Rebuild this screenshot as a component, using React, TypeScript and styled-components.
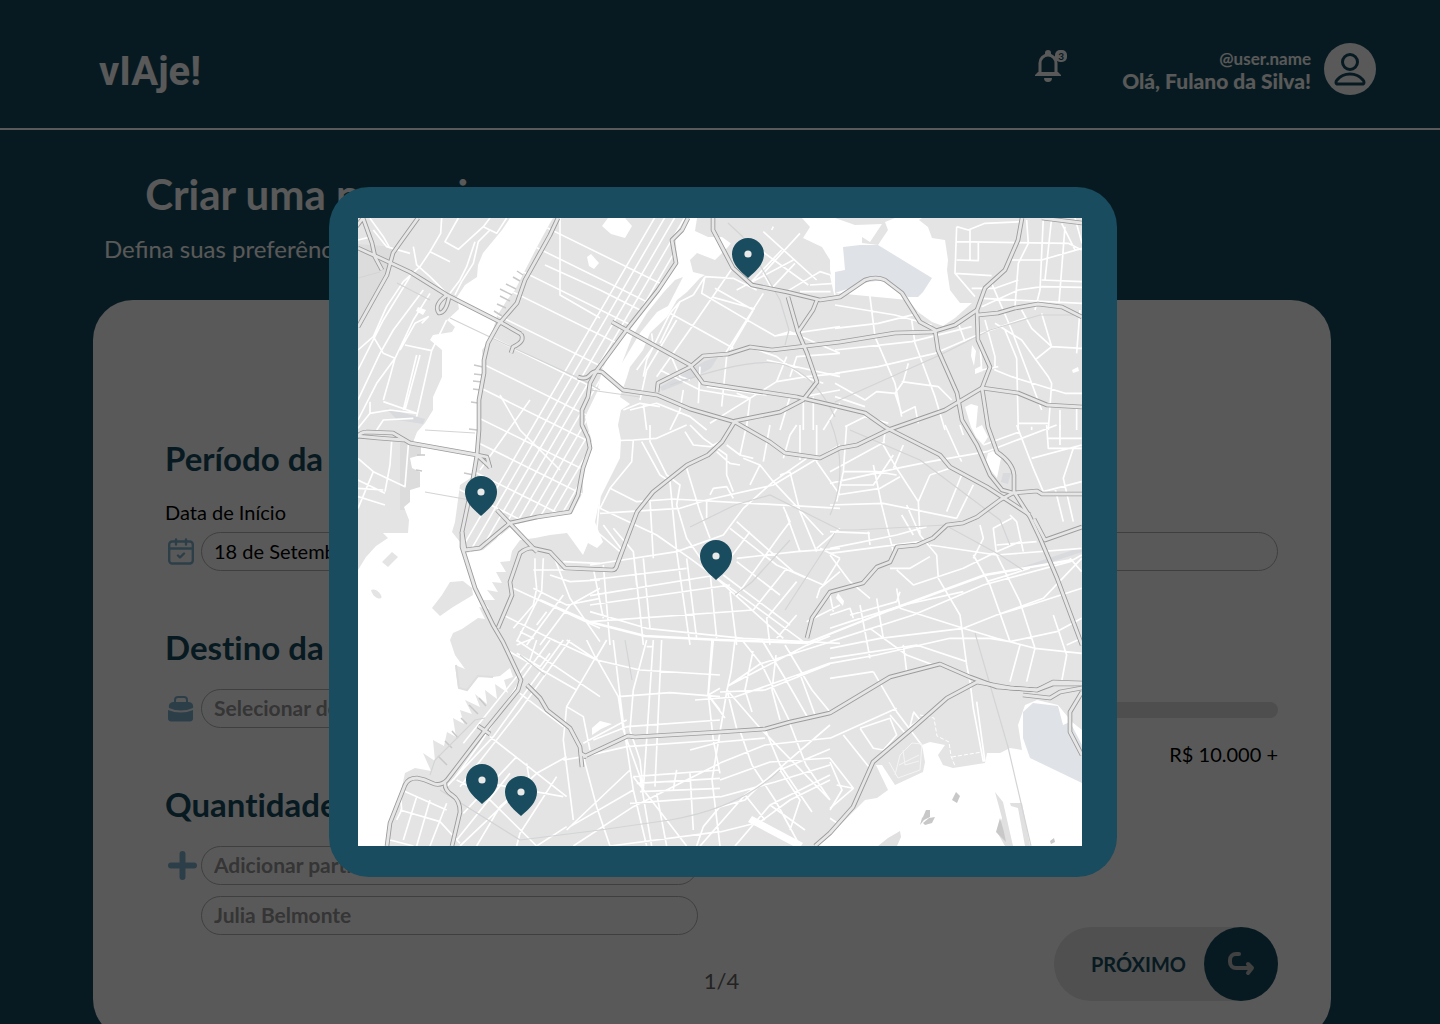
import React from "react";
import styled, { createGlobalStyle } from "styled-components";

const teal = "#184c5e";
const sky = "#7fb4d0";
const grey = "#999999";
const font = `"Lato", "Open Sans", sans-serif`;

const GlobalStyle = createGlobalStyle`
  *, *::before, *::after { box-sizing: border-box; }
  body { margin: 0; overflow: hidden; background: ${teal}; font-family: ${font}; }
  h1, h2, p { margin: 0; }
  h2, input, button { font-variant-ligatures: none; }
  input, button { font-family: inherit; }
`;

const Page = styled.div`
  height: 100vh;
  overflow: hidden;
  background: ${teal};
`;

const Header = styled.header`
  display: flex;
  align-items: center;
  height: 130px;
  padding: 10px 64px 0 99px;
  border-bottom: 2px solid #ffffff;
  color: #ffffff;
`;

const Logo = styled.a`
  margin-right: auto;
  padding-top: 6px;
  color: inherit;
  font-family: Roboto, sans-serif;
  font-size: 40px;
  font-weight: 700;
  line-height: 48px;
  text-decoration: none;
`;

const BellButton = styled.button`
  position: relative;
  width: 32px;
  height: 32px;
  margin: 0 55px 6px 0;
  padding: 0;
  border: 0;
  background: none;
  color: inherit;
`;

const Badge = styled.span`
  position: absolute;
  top: 0;
  right: 0;
  width: 12px;
  height: 12px;
  border-radius: 5px;
  background: #ffffff;
  color: ${teal};
  font-size: 10px;
  font-weight: 700;
  line-height: 12px;
  text-align: center;
`;

const User = styled.div`
  display: flex;
  align-items: center;
  gap: 13px;
  text-align: right;
`;

const UserText = styled.div`
  padding-top: 4px;
`;

const Handle = styled.p`
  font-size: 17px;
  font-weight: 700;
  line-height: 20px;
`;

const Greeting = styled.p`
  font-size: 21px;
  font-weight: 900;
  line-height: 24px;
`;

const Avatar = styled.span`
  display: grid;
  place-items: center;
  width: 52px;
  height: 52px;
  border-radius: 50%;
  background: #ffffff;
  color: ${teal};
`;

const Intro = styled.section`
  width: fit-content;
  padding: 39px 0 35px 104px;
  color: #ffffff;
  text-align: center;
`;

const Title = styled.h1`
  font-size: 42px;
  font-weight: 700;
  line-height: 50px;
`;

const Subtitle = styled.p`
  padding-top: 14px;
  font-size: 24px;
  line-height: 32px;
`;

const Card = styled.form`
  margin: 0 109px 0 93px;
  padding: 138px 53px 38px 72px;
  border-radius: 40px;
  background: #ffffff;
`;

const Row = styled.div`
  display: grid;
  grid-template-columns: 1fr 1fr;
  gap: 48px;
  margin-bottom: 56px;
`;

const LastRow = styled(Row)`
  margin-bottom: -8px;
`;

const Group = styled.div`
  display: flex;
  flex-direction: column;
`;

const SectionTitle = styled.h2`
  margin-bottom: 22px;
  color: ${teal};
  font-size: 33px;
  font-weight: 700;
  line-height: 40px;
`;

const Label = styled.label`
  margin-bottom: 8px;
  color: #000000;
  font-size: 20px;
  line-height: 24px;
`;

const Field = styled.div`
  display: grid;
  grid-template-columns: 36px 1fr;
  align-items: center;
  & + & { margin-top: 11px; }
`;

const Pill = styled.input<{ $solid?: boolean }>`
  grid-column: 2;
  width: 100%;
  height: 39px;
  padding: 0 12px 2px;
  border: 1px solid #b4b4b4;
  border-radius: 20px;
  background: transparent;
  color: ${(p) => (p.$solid ? "#000000" : grey)};
  font-size: ${(p) => (p.$solid ? 20 : 21)}px;
  font-weight: ${(p) => (p.$solid ? 400 : 700)};
  &::placeholder { color: ${grey}; opacity: 1; }
`;

const Slider = styled.input`
  appearance: none;
  width: 100%;
  height: 16px;
  margin: 13px 0 10px;
  border-radius: 8px;
  background: #dedede;
  &::-webkit-slider-thumb {
    appearance: none;
    width: 28px;
    height: 28px;
    border-radius: 50%;
    background: ${teal};
  }
`;

const Range = styled.div`
  display: flex;
  justify-content: space-between;
  height: 24px;
  margin: 14px 0 -38px;
  font-size: 20px;
  line-height: 24px;
`;

const Footer = styled.footer`
  display: grid;
  grid-template-columns: 1fr auto 1fr;
`;

const Pager = styled.p`
  grid-column: 2;
  align-self: end;
  color: #666666;
  font-size: 22px;
  line-height: 40px;
`;

const NextButton = styled.button`
  display: flex;
  grid-column: 3;
  align-items: center;
  justify-self: end;
  gap: 18px;
  padding: 0 0 0 37px;
  border: 0;
  border-radius: 37px;
  background: #e4e4e4;
  color: ${teal};
  font-size: 20px;
  font-weight: 700;
`;

const NextCircle = styled.span`
  display: grid;
  place-items: center;
  width: 74px;
  height: 74px;
  border-radius: 50%;
  background: ${teal};
  color: #ffffff;
`;

const Overlay = styled.div`
  position: fixed;
  inset: 0;
  display: flex;
  align-items: center;
  justify-content: center;
  padding: 40px 0 0 6px;
  background: rgba(0, 0, 0, 0.65);
`;

const Dialog = styled.div`
  width: min(788px, 94vw);
  padding: 31px 35px 31px 29px;
  border-radius: 40px;
  background: ${teal};
`;

const MapSvg = styled.svg`
  display: block;
  width: 100%;
  height: auto;
  background: #e4e4e4;
`;

/* ---------- map data ---------- */

const harbour =
  "M510 218L502 230 483 253 478 265 477 277 465 285 457 297 459 309 447 320 455 327 452 332 433 335 430 340 442 350 442 377 433 397 433 410 425 423 417 432 412 445 421 447 421 455 410 458 412 468 420 472 420 487 410 490 410 502 404 507 409 520 408 533 383 533 388 538 376 546 366 557 358 570V846H386L388 827 395 807 402 787 405 773 415 768 431 771 423 753 435 761 433 740 444 746 447 732 456 737 453 718 464 724 460 710 472 714 465 700 480 707 475 694 487 704 485 690 497 699 495 684 508 693 504 680 513 677 510 668 500 676 493 677 478 677 467 690 458 688 455 665 465 669 455 655 450 640 453 633 462 629 478 618 485 619 479 607 489 609 483 600 495 600 487 590 498 592 492 582 502 583 496 572 506 572 500 562 510 561 512 551 520 540 535 538 550 535 567 533 583 555 588 543 597 548 603 542 595 522 600 498 610 478 620 458 621 440 618 425 621 410 630 404 620 397 627 377 630 367 643 350 650 333 667 317 677 300 687 292 700 278 705 275 693 272 690 260 697 253 715 260 728 247 750 218Z";

const manhattan =
  "M553 218L550 223 537 247 515 290 507 300 497 316 490 340 482 350 483 367 478 400 478 423 476 450 475 475 460 485 455 522 452 532 460 542 465 553 483 550 513 525 543 518 573 512 583 492 583 468 592 442 585 417 597 392 602 370 610 353 630 327 657 293 678 263 675 235 688 218Z";

const piers =
  "M523 275l-6-4M520 281l-7-4M516 289l-10-5M512 295l-12-6M510 301l-10-5M506 308l-9-4M502 316l-8-5M483 367l-9-2M483 375l-9-1M482 382l-9-1M481 390l-8-1M478 403l-7-1M477 430l-8-1M474 475l-10-2M417 455h8M416 470l6 1M447 765l-9-9M452 748l-7-7M458 738l-6-7M467 724l-6-6M478 714l-9-9M486 706l-7-8";

const land = [
  "M622 363L640 333 657 312 668 306 683 277 675 280 663 293 647 313 632 337Z",
  "M697 218L695 231 708 237 722 237 733 245 745 230 757 218Z",
  "M432 608L442 595 450 582 463 581 472 588 473 595 453 607 440 616Z",
  "M382 562L392 552 398 557 388 567Z",
  "M371 590q5-2 10 5 2 5-4 3-5-3-6-8z",
];

const bays = [
  "M802 218L810 227 803 238 822 247 830 260 830 270 835 293 908 300 918 312 932 322 943 326 955 318 972 303 960 303 950 290 947 270 948 260 945 240 932 238 928 227 919 220 922 218H895L885 222 888 230 878 245 862 243 862 237 870 242 882 224 855 225 835 218Z",
  "M815 846L830 835 843 822 865 800 877 798 888 790 876 765 882 765 895 785 923 772 925 762 922 745 930 742 945 745 938 755 943 765 953 768 985 763 987 753 1000 753 1010 748 1022 750 1018 725 1025 705 1037 700 1058 705 1072 722 1082 730V846Z",
  "M965 407l6-3 7 2-2 22 6-3 6 12-5 8-7-8-5-10z",
  "M988 453l5-2 8 7-4 20-7-9-4-8z",
  "M592 728l8-7 12 3-11 5-9 6z",
  "M608 218h17l7 8-7 12-14-4-9-8z",
  "M587 257l4-3 8 9-5 6-5-3z",
  "M838 593l6 8-1 5-7-8z",
  "M418 307l8 3-3 5-7-4z",
  "M972 345l4 6-2 15-3-10zM975 369l6-3 2 5-8 3zM1072 370l6-3 1 4-6 2z",
  "M752 816L803 843 799 849 748 822Z",
];

const haze = [
  "M358 300L358 244 395 247 388 268 358 326Z",
  "M400 440H440V510H400Z",
];

const airports = [
  "M835 272L845 270 843 247 860 245 878 245 932 278 923 292 918 297 908 297 885 280 868 282 835 293Z",
  "M1023 712L1033 703 1058 706 1063 725 1070 722 1082 745V783L1030 758 1023 738Z",
];

const yards = [
  "M660 387L690 370 705 361 718 357 711 368 690 380 662 391Z",
  "M1022 567L1082 547V552L1024 571Z",
  "M1003 473l8 0-3 11-7-2z",
  "M386 408L425 419 423 424 397 420Z",
];

const faintLines =
  "M590 390L640 397M450 318L492 338 583 380 600 390M397 283L430 300M358 278L380 272M975 633L1008 747 1031 846M425 492L470 500M425 430L475 433M728 223L742 236 760 265 780 300 789 330 785 345M670 385Q755 355 785 365T835 417M690 527L735 505 770 495 840 530M835 402L940 355 990 330 1040 315 1082 315M840 530L855 530 945 525 1000 555 1023 570M830 420Q850 470 830 515M785 610L835 533M520 840L600 830 670 820Q740 808 780 770M440 790L520 840M520 655L545 675M430 775L435 760 475 720 485 718M625 640L632 680M850 430L920 460 1000 520 1010 545M735 595L752 582 790 540";

const highways = [
  "M358 248L380 258 410 272 447 295 500 322 521 334",
  "M521 334Q526 341 513 347L511 353",
  "M447 295Q433 305 439 313Q446 313 449 297",
  "M418 218L400 243 393 253 387 275 373 300 358 327",
  "M356 227L363 218 372 243 375 257 382 270",
  "M558 218L550 235 525 280 517 303 498 325 488 343 484 360 484 373 479 400 479 430 477 455 472 485 462 532 465 550 480 548 510 523 537 517 570 512 578 495 583 468 590 448 588 438 582 425 582 410 588 397 590 383 597 370 628 328 658 290 676 263 672 240 682 230 688 218",
  "M462 532L462 547 475 588 493 625 503 642 521 680 518 690 483 733 447 780Q440 787 432 783T417 778Q408 778 405 785L390 823 387 846",
  "M445 782Q444 790 452 795T460 812L452 846",
  "M498 628L512 595 510 582 520 553Q526 548 532 548L550 552 565 568 612 570Q616 570 617 565L637 512 653 492 687 465 708 455 722 442 735 421 780 412 803 400 817 382 807 353 798 332 788 297",
  "M798 332L813 310 817 300",
  "M713 218V230L733 268 752 285 787 292 820 300 840 297 865 280Q876 276 885 280L902 293 920 322 935 330 938 350 957 393 962 420 977 445 990 475 1002 490 1013 493",
  "M497 510L537 552",
  "M612 322L690 365 703 383 797 397 840 407 865 413 885 427 940 455 950 467 987 487 1030 515",
  "M657 392L658 383 690 367 703 356 728 354 750 347 772 350 840 342 895 333 932 332 955 325 977 310",
  "M578 377Q586 380 590 375T602 372L623 390 657 395 690 409 735 422 770 442 785 453 820 458 840 448 857 445 888 430 945 410 982 388 1018 393 1047 405 1082 407",
  "M1022 218L1018 240 1005 270 985 288 977 310 978 340 990 367 982 388 988 427 997 452Q1013 463 1014 475V492L1030 517 1040 538 1057 578 1082 645",
  "M978 315L998 313 1015 308 1038 304 1062 307 1082 317",
  "M1042 218L1082 223",
  "M1013 493L1037 491 1042 494 1082 494",
  "M1013 493L1000 500 977 517 963 523 947 525 933 538 917 545 897 547 890 562 877 567 863 583 830 592 812 618 807 638",
  "M1034 519L1045 540 1082 527",
  "M587 757L580 753M583 757L628 736 635 737 720 732 765 729 790 722 808 718 830 713 890 677 940 664 970 677 997 687 1037 690 1053 682 1082 683",
  "M527 685L540 698 547 710 570 728 580 747 582 767",
  "M815 846L830 833 853 807 873 762 913 728 947 698 977 682 1010 688 1037 690 1053 684 1082 684",
  "M1023 695L1050 698 1060 692 1082 688",
  "M1082 692L1070 712 1070 732 1082 755",
  "M356 438Q360 432 367 432L393 433 410 443 477 455 487 457 490 468",
  "M356 436L378 438 404 440",
  "M478 726l12 8",
  "M477 455l13 12",
];

/* Local streets, grouped by map tile; each tile is drawn at three units per map unit. */
const tiles = [
  {
    x: 350, y: 210,
    d: "M275 24L272 70 240 125 210 170 160 215 110 290 70 380 24 420M325 24L285 95 325 118 400 50 420 24M400 50L440 70 470 24M240 125L300 155M375 95L350 170 330 210 300 250M420 60L385 95 370 160 335 215 315 255M190 110L200 165 240 200 290 250M24 480L100 330 180 200M24 570L90 430 130 360 220 240M70 380L100 430 135 445M24 630L80 520 135 445 190 330 240 250M135 445L120 500 100 570M165 405L245 422 200 620M245 422L290 330M210 435L165 600M200 435L160 600M100 575L200 610 120 600 60 610 60 575M24 655L60 610M80 660L100 630 190 625M215 340L235 320 195 340 150 420M70 60L110 110 180 130M24 90L65 80M60 25L100 80 120 115",
  },
  {
    x: 590, y: 210,
    d: "M520 65L680 210M490 105L655 225M550 50L545 60M440 240L610 150M545 235L520 190 630 70M480 220L575 120M545 235L615 160M590 245L665 200 690 185 722 195M630 245L722 245M722 195L735 255M660 225L735 220M345 200L430 205 500 240M345 200L335 250 480 335 555 378 750 350M370 262L495 297M375 235L490 300M430 170L320 330 200 500M520 250L400 440M490 300L420 420M310 255L270 275 240 310 170 450 160 500M240 310L430 415M310 255L345 200M270 275L210 400M555 378L600 365 750 430M480 412L560 440 640 500 700 520M410 440L395 590M330 470L325 580M260 330L170 480 150 570M185 370L190 410 140 480M440 550L480 565 470 650M350 530L530 555M360 640L440 590 560 515 650 500 750 490M560 515L590 440M600 500L620 440 750 430M750 540L640 560M670 560V660M640 570V660M600 560L570 660M750 580L700 660M160 580L170 660M120 600L200 580 300 620 350 660M280 540L270 600 240 660M530 450L750 500M210 480L330 540 480 565M240 430L270 500 300 510M100 600L150 580 210 590",
  },
  {
    x: 835, y: 210,
    d: "M365 50L400 60 450 40 560 35M365 50L360 190 420 260M365 95L700 100 740 120M365 150L430 152V95M405 60V150M360 190L470 197M410 235L480 235 550 210M440 290L550 240 620 230 741 232M470 220L530 360 620 600M575 30L580 100 550 160 540 290M625 24L615 240 600 300M650 24L630 210M690 50L672 280M530 150L620 150 741 115M620 210L741 215M680 40L720 120M720 24L741 100M440 265L741 280M0 355L130 340 250 310M0 285L180 315 290 345M100 220L120 380 180 520 200 620M230 330L240 400 300 560 330 660M0 420L230 395 410 350M0 490L130 470 300 430 440 370 570 325M370 340L390 395M450 330L480 440 480 480 530 500 690 550 741 550M560 300L590 355 650 410 741 415M600 450L650 410 620 310M510 360L545 445 550 660M480 340L560 390 640 500 650 520 640 660M735 300L725 430M200 515L310 530 350 570M0 520L90 570 125 545 180 550 205 515 220 460M160 640L90 620 30 650M550 640L640 640M590 650V660M675 600V660M725 590V660M0 560L90 590M180 550L200 610 240 590 250 640M490 470L440 480 430 320",
  },
  {
    x: 350, y: 425,
    d: "M125 50L120 120 105 200M24 100L70 140 24 250M70 140L165 185 175 60M24 165L105 205M24 190L100 195M105 240L24 215M480 10L410 130 360 300M530 60L470 170 380 270 350 350M440 60L570 130 690 200M440 100L650 210M500 20L700 130M430 130L540 190 680 240M450 150L420 230 500 250M575 70L520 240 550 270M640 50L560 200 530 290M405 20L430 120 490 200M690 60L610 220 605 260M430 200L480 260M480 170L520 240 560 225M550 435H750M555 400V440L560 490 550 540 490 610M580 400L575 500 500 650M610 390L660 520 750 650M640 410L750 415M600 450L660 470 750 465M490 490L620 550 750 610M550 490L650 540 750 520M750 490L660 540 570 660M460 570L620 650M510 620L550 640 500 660M640 510L530 660M590 560L560 600",
  },
  {
    x: 350, y: 640,
    d: "M500 0L750 170M470 30L680 150M610 0L740 60 870 90 1110 105M740 60L650 0M740 60L710 0M770 0L735 60M735 55L650 200 700 230 720 330M740 55L805 170 820 270 870 410 905 618M640 0L430 290 290 440M600 0L520 110 390 310 310 420M560 0L540 60 340 310M500 40L570 80 600 40M660 0L510 210 330 440M420 290L650 470M510 160L640 260M650 200L640 300 670 540M320 420L400 460 560 618M360 420L640 470M640 360L700 350M790 0L820 250 850 450 890 618M890 0L850 150 840 270 870 360 880 450M910 0L880 450M935 0L915 440M950 618L920 460M805 170L960 158 1110 170M890 20H910M730 300L830 260 1110 240M700 350L830 320 1110 300M650 350L560 400 330 618M700 350L740 500 780 618M850 410L1110 390M860 430L1110 415M870 455L1110 445M840 490L1110 470M660 560L850 450M650 570L840 390M850 410L1010 618M560 618L650 560M480 400L320 600M560 400L450 500 380 618M620 410L510 580 500 618M500 350L340 520M530 370L540 430M780 618L1110 575M670 618L850 500 1110 370M1020 400L1030 570M980 390L970 450M155 450L290 510M150 510L270 545 330 610M200 470L160 600M240 480L200 618M290 490L240 618M120 600L190 618M150 440L155 510 140 540M1090 0L1075 165 1110 210M1110 145L1075 165M1110 500L1060 560 1040 618M1075 165L1090 300 1110 400M700 310L830 240",
  },
  {
    x: 590, y: 425,
    d: "M0 50L130 45 200 40 290 0M130 45L125 110 60 190 30 250M155 50L210 150 240 170 260 380 300 660M180 0V50L230 150 270 180 260 240 290 340 360 440 380 640M285 20L310 60 360 65 400 45M300 0L340 40 410 90 410 150 430 200M540 0L520 110M620 0L600 30 580 100M630 0V105M680 0V110L750 210M60 190L140 230 250 222 750 250M30 250L200 330 300 400 640 650M30 265L270 250 350 225 550 180 750 60M180 225L190 400M290 130L330 260 360 340M360 210L370 190 410 185 430 220M350 225L350 280M0 420L260 380 400 330 460 250 550 170 650 100M0 465L290 430M0 512L380 450M0 540L420 480M0 590L490 555M0 560L170 610 460 640 750 655M440 290L610 440 700 480 750 400M420 310L560 420 650 460M400 450L600 600M440 512L570 330 600 290 580 245M440 400L620 380 750 370M480 320L420 400M600 140L630 260 680 380M600 140L570 150M590 270L630 380M680 370L750 310M690 370L750 400M590 430L490 555M620 470L530 580 540 660M440 410L570 510M420 500L440 660M380 460L580 640M130 380L150 560 160 660M160 400L180 610M40 420L60 660M10 430L40 580M70 310L130 380 140 480M40 300L100 380M290 400L320 640M30 210L20 320 90 380M460 100L510 120 550 170 700 330M510 120L480 180M620 570L560 640M410 60L450 90 490 100M450 90L470 0M750 440L690 490 680 520M720 510L730 560M650 590L750 540M380 80L420 115 450 120",
  },
  {
    x: 830, y: 425,
    d: "M165 20L160 60 200 130 265 230 270 330 320 390 325 460 390 570 410 720M345 0L395 110M0 140L165 50M0 175L200 130 300 110 470 80 680 0M0 240L160 235 380 280M0 370L200 330 290 305M0 385L270 350M50 0L40 140 20 230M130 120L155 240 190 380M40 140H140L200 150M20 210L150 190 210 155M30 180L130 180 190 90M300 150L265 230M360 130L300 150M395 150L350 260M430 180L380 280M220 60L190 130M460 60L570 20M560 0L610 130 640 200M605 100L755 60M650 0L655 70H755M690 0V60M650 40H755M675 190L700 290M730 70L700 160 730 290M640 200L755 170M300 360L500 390 755 370M0 390L60 470 120 520M180 430L240 430 300 395M200 435L250 480 400 430 500 380 570 350M0 650L250 570 460 480 720 410 755 390M0 610L60 590 220 540 400 500M0 670L150 640 400 610 500 570 640 520 755 400M0 700L260 660 410 710M0 715L140 690 360 640 480 640 540 650 680 620 755 580M60 570L200 530 210 500M70 580L60 550 0 570M90 540L120 700M140 520L160 640M200 490L210 550M120 610L230 690 310 720M210 550L400 610 500 640 615 670 755 685M430 390L480 480 540 650M500 390L570 530 615 670M545 280L490 310 500 390M450 300L460 340 430 400M570 660L540 770M615 670L590 770M670 570L710 690 695 770M500 570L600 540 755 490M130 740L200 860 290 980M0 940L200 850M0 870L100 800M40 930L120 1030M90 910L130 970 160 975 200 930 180 880 90 910M180 870L230 930M0 1000L70 1090 0 1150M0 1180L30 1200M20 1080L70 1090M420 770L430 850 460 1010M440 830L465 1010M410 720L420 770M390 0L400 30M0 760L130 740M580 380L560 290 540 270M500 360L620 350M470 470L600 430M720 400L755 440M755 640L710 660M0 320L120 325M115 320L120 360M215 270L250 330M230 240L270 330M220 660L230 740M250 860l20 25-30 20 10-40",
  },
];

/* Streets of the southern neighbourhoods, in map units. */
const southStreets =
  "M735 640L731 672 727 690 737 730M712 640L708 695 725 718M728 686L805 646 830 636M728 686L760 664 830 642M720 692L765 690 830 664M735 697L800 674 830 663M742 640L762 665 790 722M762 640L786 680 808 718M785 645L812 690 830 712M727 690L760 728 830 800M727 690L720 732 712 780 720 846M740 731L752 765 775 800 800 846M765 729L780 765 812 812M790 724L806 765 830 800M720 763L765 745 830 738M720 780L770 762 830 758M720 797L775 782 830 765M720 807L745 800 760 785 830 725M700 846L745 795 780 770 830 749M735 846L770 805 830 775M720 832L760 822 790 800 830 780M690 750L720 742 765 738M695 700L735 697M770 805L805 830M830 762L842 790 830 810M780 770L800 800 790 830M745 795L765 820M753 651L745 690 752 712M776 655L772 690 780 720M800 674L815 715";

const avenues = Array.from({ length: 24 }, (_, i) => `M${455 + i * 10} 560l210-360`).join("");
const streets = Array.from({ length: 12 }, (_, i) => `M${440 + (i % 2) * 6} ${175 + i * 28}l260 128`).join("");

const pins = [
  { x: 748, y: 254 },
  { x: 481, y: 492 },
  { x: 716, y: 556 },
  { x: 482, y: 780 },
  { x: 521, y: 792 },
];

function CityMap() {
  return (
    <MapSvg viewBox="358 218 724 628" role="img" aria-label="Mapa de destinos">
      <defs>
        <clipPath id="island"><path d={manhattan} /></clipPath>
      </defs>
      <g fill="#dcdcdc">{haze.map((d) => <path key={d} d={d} />)}</g>
      <g fill="#d9dadd">{yards.map((d) => <path key={d} d={d} />)}</g>
      <g fill="none" stroke="#ffffff" strokeLinejoin="round">
        {tiles.map((t) => (
          <path key={`${t.x}-${t.y}`} d={t.d} strokeWidth="5" transform={`translate(${t.x} ${t.y}) scale(0.3333)`} />
        ))}
        <path d={southStreets} strokeWidth="1.7" />
        <path d="M540 600L590 622 645 636 720 640 807 643 890 610 985 575 1072 560" strokeWidth="2.4" />
      </g>
      <path d={harbour} fill="#ffffff" />
      <path d={manhattan} fill="#e4e4e4" />
      <g fill="#e4e4e4">{land.map((d) => <path key={d} d={d} />)}</g>
      <g clipPath="url(#island)" stroke="#ffffff" strokeWidth="1.6" fill="none">
        <path d={avenues} />
        <path d={streets} />
        <path d="M560 210V295L600 318M545 265L600 290 640 310M500 395L520 430 560 470M480 470L530 400" />
      </g>
      <path d={piers} stroke="#c9c9c9" strokeWidth="1.5" fill="none" />
      <path d="M456 665L459 688 467 690 478 676 493 677" fill="none" stroke="#dedede" strokeWidth="2" />
      <g fill="#ffffff">{bays.map((d) => <path key={d} d={d} />)}</g>
      <g fill="#dfe2e7">{airports.map((d) => <path key={d} d={d} />)}</g>
      <path d="M878 846L888 838 900 831 901 837 897 846ZM995 792L1003 802 1013 846H1005L997 832 1002 818ZM1010 803h12l8 43-5 0-7-38-7-2z" fill="#e0e0e0" />
      <path d="M923 817l3-7h4v7l-6 3-4 5 2-7zM923 823l6-5 6-1-3 6-7 2zM952 800l4-8 4 4-3 7zM1050 841l4-3 1 4-4 2zM1000 818l-4 14 10 10-2-10z" fill="#c8c8c8" />
      <path d="M895 775l5-20 12-12 10 1-2 26-22 8-9-16M899 765l20-10M903 750l2 15 14-4" fill="none" stroke="#f4f4f4" strokeWidth="1" />
      <path d="M920 715l14 3 3 18 12 6 2 14 4 10M952 757l30-5" fill="none" stroke="#ffffff" strokeDasharray="4 2" />
      <path d={faintLines} fill="none" stroke="#d3d4d6" strokeWidth="1.2" />
      <g fill="none" strokeLinejoin="round">
        {highways.map((d) => <path key={d} d={d} stroke="#9c9c9c" strokeWidth="4.6" />)}
        {highways.map((d) => <path key={d} d={d} stroke="#e6e6e6" strokeWidth="2.8" />)}
      </g>
      {pins.map((p) => (
        <g key={`${p.x}-${p.y}`} transform={`translate(${p.x} ${p.y})`}>
          <path d="M0-16A16 16 0 0 1 16 0C16 10 8 17 0 24C-8 17-16 10-16 0A16 16 0 0 1 0-16Z" fill={teal} />
          <circle r="3.6" fill="#e9e9e9" />
        </g>
      ))}
    </MapSvg>
  );
}

/* ---------- icons ---------- */

const Block = styled.svg`
  display: block;
`;

const FieldIcon = styled.svg`
  display: block;
  margin-left: 3px;
`;

const BellIcon = () => (
  <Block width="26" height="32" viewBox="0 0 26 32" fill="none">
    <path d="M5 25V13a8 8 0 0 1 16 0v12" stroke="currentColor" strokeWidth="3" />
    <path d="M0 26v-1l3-3h20l3 3v1ZM9 28h8a4 4 0 0 1-8 0ZM10 5V3a3 3 0 0 1 6 0v2Z" fill="currentColor" />
  </Block>
);

const UserIcon = () => (
  <Block width="32" height="34" viewBox="0 0 32 34" fill="none" stroke="currentColor" strokeWidth="3">
    <circle cx="16" cy="10" r="7.5" />
    <path d="M4 32C1 32 2 29 3 28Q8 22 16 22T29 28C30 29 31 32 28 32Z" />
  </Block>
);

const CalendarIcon = () => (
  <FieldIcon width="26" height="28" viewBox="0 0 26 28" fill="none" stroke={sky} strokeWidth="2.4" strokeLinecap="round" strokeLinejoin="round">
    <rect x="1.2" y="3.5" width="23.6" height="22" rx="3" />
    <path d="M1 10.5h24M8 1.5v5M18 1.5v5M10 17.5l2 2 4-4" />
  </FieldIcon>
);

const BagIcon = () => (
  <FieldIcon width="26" height="26" viewBox="0 0 26 26" fill={sky}>
    <path d="M7 6V4a3 3 0 0 1 3-3h6a3 3 0 0 1 3 3v2" fill="none" stroke={sky} strokeWidth="2" />
    <path d="M5 6h16q5 1 4 6-12 5-24 0Q0 7 5 6ZM0 14q13 5 25 0v8a3 3 0 0 1-3 3.500H3a3 3 0 0 1-3-3.500Z" />
  </FieldIcon>
);

const PlusIcon = () => (
  <FieldIcon width="29" height="29" viewBox="0 0 29 29" stroke={sky} strokeWidth="6" strokeLinecap="round">
    <path d="M14.5 3v23M3 14.5h23" />
  </FieldIcon>
);

const TurnIcon = () => (
  <Block width="28" height="26" viewBox="0 0 28 26" fill="none" stroke="#b9b9b9" strokeWidth="4" strokeLinecap="round" strokeLinejoin="round">
    <path d="M12 3H9a6 6 0 0 0-6 6v2a6 6 0 0 0 6 6h15M21 13l4 4-4 5" />
  </Block>
);

export default function App() {
  return (
    <>
      <GlobalStyle />
      <Page>
        <Header>
          <Logo href="#">vIAje!</Logo>
          <BellButton type="button" aria-label="Notificações">
            <BellIcon />
            <Badge>3</Badge>
          </BellButton>
          <User>
            <UserText>
              <Handle>@user.name</Handle>
              <Greeting>Olá, Fulano da Silva!</Greeting>
            </UserText>
            <Avatar><UserIcon /></Avatar>
          </User>
        </Header>
        <Intro>
          <Title>Criar uma nova viagem</Title>
          <Subtitle>Defina suas preferências para a sua nova viagem</Subtitle>
        </Intro>
        <Card>
          <Row>
            <Group>
              <SectionTitle>Período da viagem</SectionTitle>
              <Label htmlFor="start">Data de Início</Label>
              <Field>
                <CalendarIcon />
                <Pill id="start" $solid defaultValue="18 de Setembro" />
              </Field>
            </Group>
            <Group>
              <SectionTitle>&nbsp;</SectionTitle>
              <Label htmlFor="end">Data de Fim</Label>
              <Field>
                <CalendarIcon />
                <Pill id="end" $solid />
              </Field>
            </Group>
          </Row>
          <Row>
            <Group>
              <SectionTitle>Destino da viagem</SectionTitle>
              <Field>
                <BagIcon />
                <Pill aria-label="Destino" placeholder="Selecionar destino" />
              </Field>
            </Group>
            <Group>
              <SectionTitle>Orçamento</SectionTitle>
              <Slider type="range" aria-label="Orçamento" defaultValue={20} />
              <Range>
                <span>R$ 0</span>
                <span>R$ 10.000 +</span>
              </Range>
            </Group>
          </Row>
          <LastRow>
            <Group>
              <SectionTitle>Quantidade de pessoas</SectionTitle>
              <Field>
                <PlusIcon />
                <Pill aria-label="Participante" placeholder="Adicionar participante" />
              </Field>
              <Field>
                <Pill aria-label="Nome do participante" defaultValue="Julia Belmonte" />
              </Field>
            </Group>
          </LastRow>
          <Footer>
            <Pager>1/4</Pager>
            <NextButton type="button">
              PRÓXIMO
              <NextCircle><TurnIcon /></NextCircle>
            </NextButton>
          </Footer>
        </Card>
      </Page>
      <Overlay>
        <Dialog role="dialog" aria-modal="true" aria-label="Mapa">
          <CityMap />
        </Dialog>
      </Overlay>
    </>
  );
}
